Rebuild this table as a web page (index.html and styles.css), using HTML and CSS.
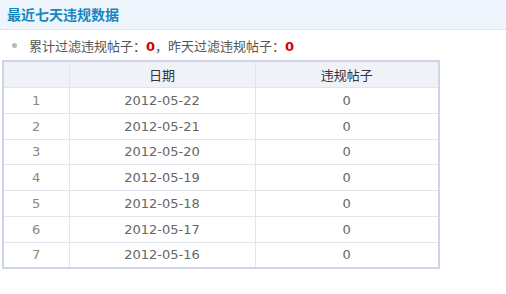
FILE: index.html
```html
<!DOCTYPE html>
<html lang="zh-CN">
<head>
<meta charset="utf-8">
<title>最近七天违规数据</title>
<link rel="stylesheet" href="styles.css">
</head>
<body>
<div class="hd"><h3 class="title">最近七天违规数据</h3></div>
<div class="summary"><span class="dot"></span><span>累计过滤违规帖子：<b class="num">0</b>，昨天过滤违规帖子：<b class="num">0</b></span></div>
<table class="grid">
  <colgroup><col class="c1"><col class="c2"><col class="c3"></colgroup>
  <thead>
    <tr><th></th><th>日期</th><th>违规帖子</th></tr>
  </thead>
  <tbody>
    <tr><td class="idx">1</td><td>2012-05-22</td><td>0</td></tr>
    <tr><td class="idx">2</td><td>2012-05-21</td><td>0</td></tr>
    <tr><td class="idx">3</td><td>2012-05-20</td><td>0</td></tr>
    <tr><td class="idx">4</td><td>2012-05-19</td><td>0</td></tr>
    <tr><td class="idx">5</td><td>2012-05-18</td><td>0</td></tr>
    <tr><td class="idx">6</td><td>2012-05-17</td><td>0</td></tr>
    <tr><td class="idx">7</td><td>2012-05-16</td><td>0</td></tr>
  </tbody>
</table>
</body>
</html>
```
FILE: styles.css
```css
html, body {
  margin: 0;
  padding: 0;
  background: #ffffff;
}
body {
  font-family: "DejaVu Sans", "Noto Sans CJK SC", sans-serif;
  font-size: 13px;
  color: #555;
}
.hd {
  height: 29px;
  background: #eef5fd;
  border-bottom: 1px dotted #c9dbef;
  padding-left: 7px;
}
.title {
  margin: 0;
  font-family: "Noto Sans CJK SC", sans-serif;
  font-size: 14px;
  font-weight: bold;
  line-height: 29px;
  color: #1a86c0;
}
.summary {
  height: 30px;
  display: flex;
  align-items: center;
  padding-left: 12px;
  gap: 12px;
  font-family: "Noto Sans CJK SC", sans-serif;
  color: #555;
}
.dot {
  width: 5px;
  height: 5px;
  border-radius: 50%;
  background: #b8b8b8;
}
.num {
  font-family: "DejaVu Sans", sans-serif;
  color: #d40000;
  font-weight: bold;
}
.grid {
  margin-left: 2px;
  width: 438px;
  border-collapse: collapse;
  border: 2px solid #cdd5e7;
  table-layout: fixed;
}
.c1 { width: 66px; }
.c2 { width: 186px; }
.grid th, .grid td {
  border: 1px solid #e0e5f0;
  padding: 0;
  text-align: center;
  font-weight: normal;
}
.grid th {
  height: 25px;
  background: #f0f2f8;
  color: #333;
  font-family: "Noto Sans CJK SC", sans-serif;
}
.grid td {
  height: 24.75px;
  color: #666;
}
.grid td.idx {
  color: #888;
}
```
